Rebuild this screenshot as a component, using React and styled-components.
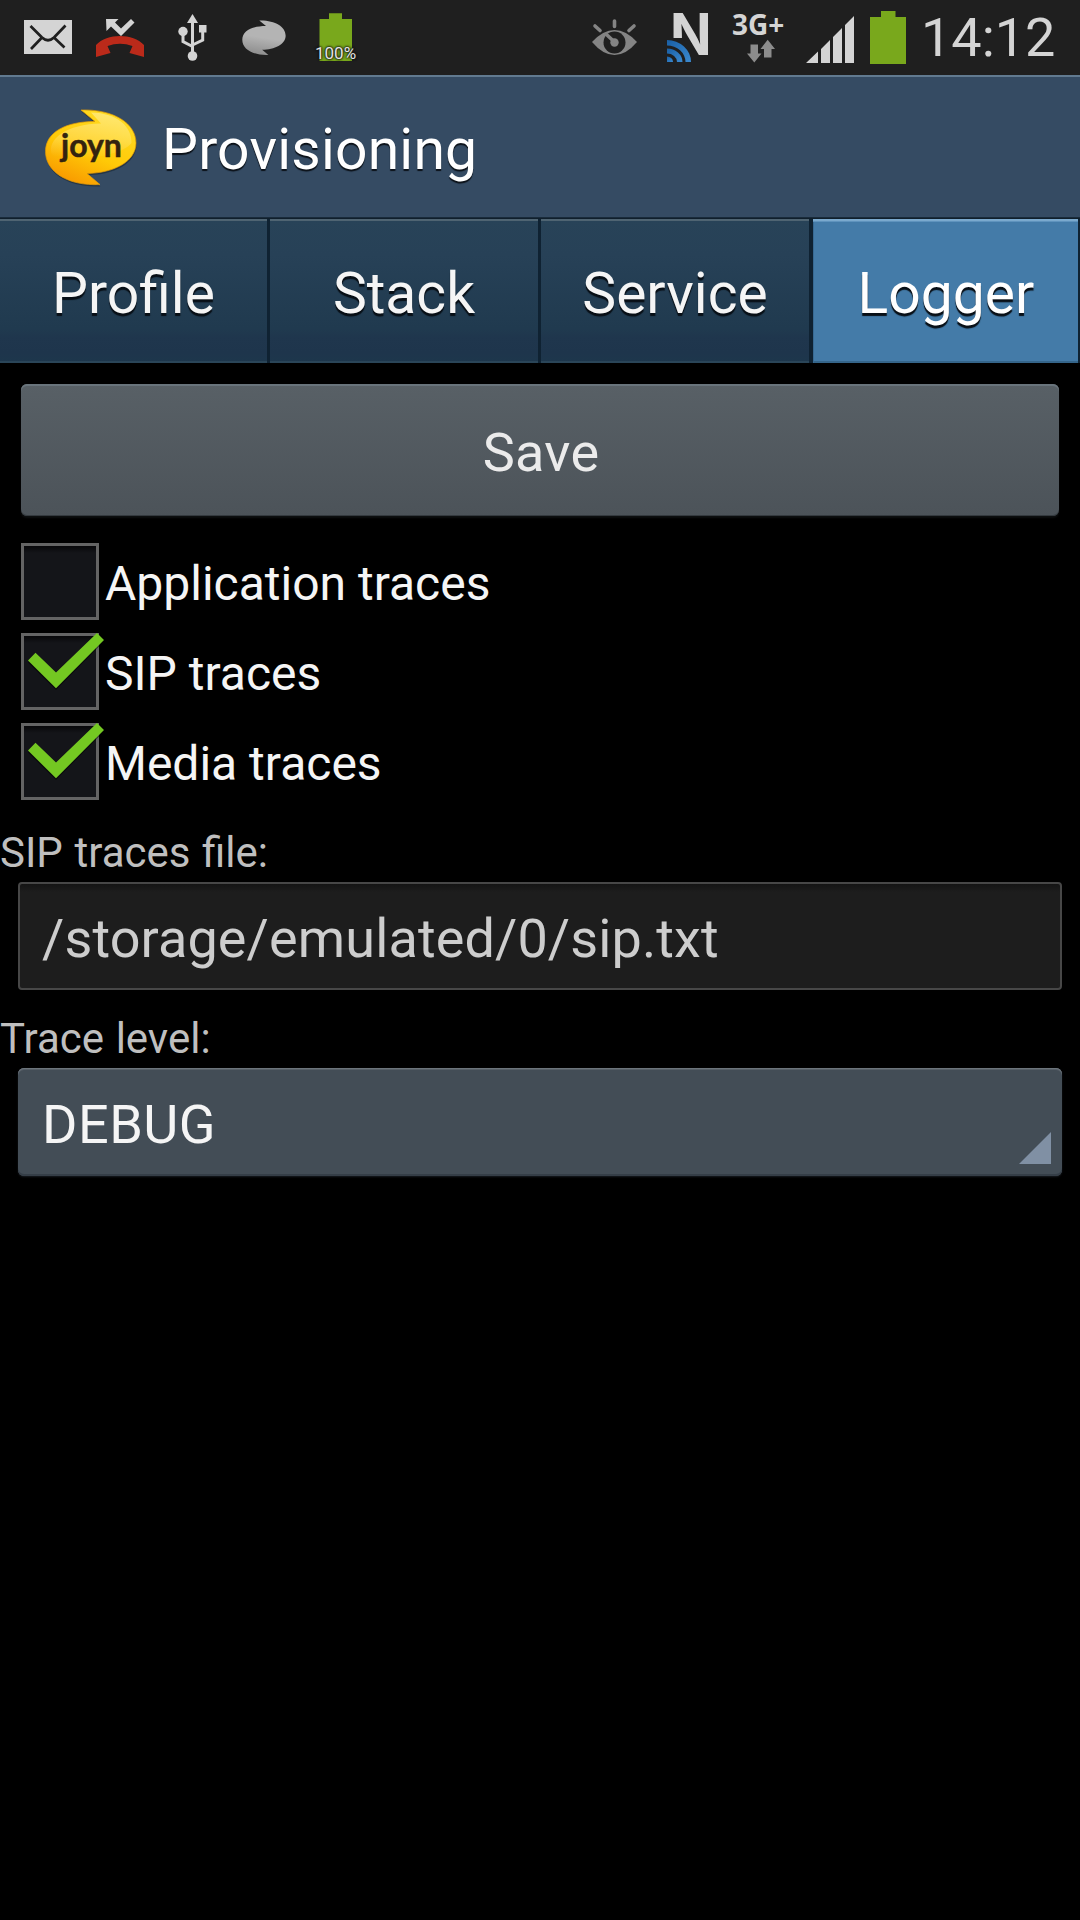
import React, { useState } from "react";
import styled, { createGlobalStyle } from "styled-components";

const GlobalStyle = createGlobalStyle`
  * { box-sizing: border-box; }
  body { margin: 0; background: #000; }
  button, input { font: inherit; color: inherit; border: 0; margin: 0; outline: 0; }
`;

const Screen = styled.div`
  width: 1080px;
  height: 1920px;
  overflow: hidden;
  display: flex;
  flex-direction: column;
  background: #000;
  color: #f5f5f5;
  font-family: Roboto, "Noto Sans", sans-serif;
  font-size: 54px;
`;

/* Status bar */
const StatusBar = styled.div`
  height: 75px;
  flex: none;
  display: flex;
  justify-content: space-between;
  padding: 0 24px;
  background: #1f1f1f;
`;

const StatusGroup = styled.div`
  display: flex;
  gap: ${(p) => p.$gap}px;
`;

const Glyph = styled.svg`
  display: block;
  height: 75px;
  width: ${(p) => p.$w}px;
  flex: none;
  overflow: visible;
`;

const NotificationBattery = styled.div`
  position: relative;
`;

const BatteryPercent = styled.span`
  position: absolute;
  left: 3px;
  top: 42px;
  font-size: 17px;
  line-height: 22px;
  color: #e4e4e4;
  text-shadow: 0 0 2px #111, 0 0 2px #111, 0 0 3px #111;
`;

const Network = styled.div`
  width: 56px;
  margin-left: 5px;
  padding-top: 10px;
  font-family: "Open Sans", sans-serif;
  font-weight: 700;
  font-size: 28px;
  line-height: 28px;
  color: #d4d4d4;
`;

const NetworkArrows = styled.svg`
  display: block;
  width: 28px;
  height: 24px;
  margin: 1px 0 0 15px;
`;

const Clock = styled.time`
  width: 135px;
  line-height: 75px;
  font-size: 54px;
  color: #d4d4d4;
`;

/* Title bar */
const TitleBar = styled.header`
  height: 144px;
  flex: none;
  display: flex;
  align-items: center;
  padding-left: 42px;
  background: #354b63;
  box-shadow: inset 0 2px #617a90, inset 0 -1px #101f2c, inset 0 -2px #192b3b;
`;

const Logo = styled.svg`
  width: 98px;
  height: 84px;
  margin-top: 2px;
  flex: none;
`;

const Title = styled.h1`
  margin: 0 0 0 22px;
  padding-top: 5px;
  font-weight: 400;
  font-size: 57px;
  line-height: 66px;
  letter-spacing: 0.2px;
  color: #fff;
  text-shadow: 0 2px 1px #0b1118;
`;

/* Tabs */
const Tabs = styled.nav`
  height: 144px;
  flex: none;
  display: grid;
  grid-template-columns: 267px 268px 268px 265px;
  gap: 3px;
  padding-right: 1px;
  background: #0f2232;
`;

const Tab = styled.button`
  padding: 5px 0 0;
  font-size: 57px;
  text-align: center;
  color: ${(p) => (p.$active ? "#fff" : "#f5f5f5")};
  text-shadow: 0 3px 1px #080f16;
  background: ${(p) =>
    p.$active
      ? "#447ba8"
      : "linear-gradient(#284358 0%, #274157 25%, #203a4f 76%, #1f364d 82%, #1e354c 93%, #1d374c 100%)"};
  box-shadow: ${(p) =>
    p.$active
      ? "inset 0 2px #7ba9cd, inset 0 3px #5f93bd, inset 1px 0 #386a93, inset 0 -2px #35658a"
      : "inset 0 2px #4f6472, inset 0 -2px #2a4558"};

  &:last-child {
    margin-left: 1px;
    margin-right: -1px;
    padding-left: 1px;
  }
`;

/* Form */
const SaveButton = styled.button`
  height: 132px;
  flex: none;
  margin: 21px 21px 0;
  padding: 5px 0 0 2px;
  border-radius: 6px;
  text-align: center;
  font-size: 54px;
  letter-spacing: 0.3px;
  color: #ebebeb;
  background: linear-gradient(#586066, #4c5359);
  box-shadow: inset 0 2px #69747c, inset 0 -1px #343a3f, 0 2px 2px #0d0f10;
`;

const CheckList = styled.div`
  display: flex;
  flex-direction: column;
  gap: 13px;
  margin: 27px 0 0 21px;
`;

const CheckRow = styled.div`
  display: flex;
  height: 77px;
  cursor: pointer;
`;

const CheckBox = styled.div`
  width: 78px;
  height: 77px;
  flex: none;
  border: 3px solid #646464;
  background: linear-gradient(#070709, #141519 7px);
`;

const CheckMark = styled.svg`
  display: block;
  width: 80px;
  height: 62px;
  margin: -3px 0 0 -3px;
  overflow: visible;
`;

const CheckLabel = styled.span`
  margin-left: 6px;
  padding-top: 2px;
  font-size: 48px;
  line-height: 77px;
`;

const FieldLabel = styled.div`
  height: ${(p) => p.$h}px;
  margin-top: ${(p) => p.$top}px;
  font-size: 42px;
  line-height: ${(p) => p.$h}px;
  word-spacing: 1.2px;
  color: #bfbfbf;
`;

const FileInput = styled.input`
  height: 108px;
  width: 1044px;
  margin-left: 18px;
  padding: 5px 22px 0;
  border: 2px solid #474747;
  border-radius: 4px;
  font-size: 54px;
  letter-spacing: 0.12px;
  color: #cdcdcd;
  background: linear-gradient(#141414, #1d1d1d 8px);
`;

const LevelSelect = styled.button`
  height: 108px;
  width: 1044px;
  margin-left: 18px;
  padding: 4px 11px 0 24px;
  display: flex;
  justify-content: space-between;
  align-items: center;
  border-radius: 6px;
  font-size: 54px;
  letter-spacing: 0.5px;
  background: #434d56;
  box-shadow: inset 0 1px #6d757c, inset 0 2px #565f67, inset 0 -2px #353e47, 0 1px 2px #171b20;
`;

const Corner = styled.svg`
  width: 32px;
  height: 32px;
  align-self: flex-end;
  margin-bottom: 12px;
`;

const BUBBLE =
  "M81 110C113 109 136 123 136 143C136 162 113 173 87 173.5L100 184.6C68 186 45.500 172 45.500 151.500C45.500 132 66 121.500 95 121.500Z";

const INITIAL_TRACES = [
  { name: "Application traces", on: false },
  { name: "SIP traces", on: true },
  { name: "Media traces", on: true },
];

function Notifications() {
  return (
    <StatusGroup $gap={24}>
      <Glyph $w={48} viewBox="24 0 48 75">
        <path d="M24 20h48v34H24z" fill="#d4d4d4" />
        <path d="M30.500 26L42 37.500Q48 43 54 37.500L65.500 25.500M41.500 38L31 49M54.500 38L64.500 47.500" fill="none" stroke="#1f1f1f" strokeWidth="2.700" />
      </Glyph>
      <Glyph $w={48} viewBox="96 0 48 75">
        <path d="M106 19H118.500L115 22.500L121 28.500L131 19L134.500 22.500L121 36L111 26.500L106.500 31Z" fill="#d4d4d4" />
        <path d="M96 45C107 33 133 33 144 45V57L129.500 53L132.500 46Q120 41.500 107.500 46L110.500 53L96 57Z" fill="#bb2a1a" />
      </Glyph>
      <Glyph $w={48} viewBox="168 0 48 75">
        <g fill="#d4d4d4">
          <path d="M192.500 14L198 23H187Z" />
          <circle cx="183" cy="31.500" r="4.700" />
          <path d="M199 25h7.500v7.500H199z" />
          <circle cx="192.500" cy="56" r="4.800" />
        </g>
        <path d="M192.500 22V56M183 32V41.500L192.500 46.500M202.700 31V40L192.500 45" fill="none" stroke="#d4d4d4" strokeWidth="3" />
      </Glyph>
      <Glyph $w={48} viewBox="240 0 48 75">
        <defs>
          <linearGradient id="greyBubble" x1="0.600" y1="0" x2="0.400" y2="1">
            <stop offset="0" stopColor="#b4b4b4" />
            <stop offset="0.500" stopColor="#b4b4b4" />
            <stop offset="1" stopColor="#8d8d8d" />
          </linearGradient>
        </defs>
        <path
          transform="translate(220.500 -30) scale(.479 .460)"
          d={BUBBLE}
          fill="url(#greyBubble)"
        />
      </Glyph>
      <NotificationBattery>
        <Glyph $w={48} viewBox="312 0 48 75">
          <path d="M319.500 19H329V13.300H342V19H352V61H319.500Z" fill="#79a81c" />
        </Glyph>
        <BatteryPercent>100%</BatteryPercent>
      </NotificationBattery>
    </StatusGroup>
  );
}

function SystemIcons() {
  return (
    <StatusGroup $gap={12}>
      <Glyph $w={54} viewBox="588 0 54 75">
        <path d="M592 42Q603 30 614.500 30T637 42Q626 55 614.500 55T592 42Z" fill="#848484" />
        <circle cx="614.500" cy="42.500" r="11" fill="#1f1f1f" />
        <circle cx="614.500" cy="42.500" r="4.200" fill="#848484" />
        <path d="M614.500 42L607 35M614.500 21V26.500M595 26L600 30.500M634 26L629 30.500" stroke="#848484" strokeWidth="3.600" strokeLinecap="round" />
      </Glyph>
      <Glyph $w={61} viewBox="654 0 61 75">
        <defs>
          <linearGradient id="wave" x1="0" y1="0" x2="1" y2="1">
            <stop offset="0" stopColor="#195fa5" />
            <stop offset="1" stopColor="#3b8ad0" />
          </linearGradient>
        </defs>
        <text
          transform="translate(670 55) scale(.95 1)"
          fontFamily="Inter, sans-serif"
          fontWeight="700"
          fontSize="57.500"
          fill="#d4d4d4"
        >
          N
        </text>
        <path d="M667 38H682.500L686 44V62H667Z" fill="#1f1f1f" />
        <g fill="url(#wave)">
          <path d="M667 40A24 22 0 0 1 691 62H685.500A18.500 16.500 0 0 0 667 45.500Z" />
          <path d="M667 48.500A15.500 13.500 0 0 1 682.500 62H677A10 8.500 0 0 0 667 53.500Z" />
          <path d="M667 56.500A6 5.500 0 0 1 673 62H667Z" />
        </g>
      </Glyph>
      <Network>
        3G+
        <NetworkArrows viewBox="747 39.500 28 24">
          <path d="M750.500 45H758V54H761.500L754.300 63L747 54H750.500ZM764 58V49.500H760.500L767.700 40.300L775 49.500H771.500V58Z" fill="#8c8c8c" />
        </NetworkArrows>
      </Network>
      <Glyph $w={57} viewBox="800 0 57 75">
        <path d="M806 63L818 51.500V63ZM821 63V49L830 40V63ZM833 63V37L842 28V63ZM845 63V25L854 16V63Z" fill="#d4d4d4" />
      </Glyph>
      <Glyph $w={40} viewBox="869 0 40 75">
        <path d="M870 17H881V11H895.500V17H906V64H870Z" fill="#79a81c" />
      </Glyph>
      <Clock>14:12</Clock>
    </StatusGroup>
  );
}

function JoynLogo() {
  return (
    <Logo viewBox="42 106 98 84">
      <defs>
        <linearGradient id="gold" x1="0.700" y1="0.100" x2="0.250" y2="0.950">
          <stop offset="0" stopColor="#ffd91f" />
          <stop offset="0.550" stopColor="#ffc907" />
          <stop offset="1" stopColor="#f99b00" />
        </linearGradient>
        <linearGradient id="gloss" x1="0.600" y1="0" x2="0.500" y2="1">
          <stop offset="0" stopColor="#fff" stopOpacity="0.350" />
          <stop offset="0.600" stopColor="#fff" stopOpacity="0.200" />
          <stop offset="1" stopColor="#fff" stopOpacity="0" />
        </linearGradient>
      </defs>
      <path d={BUBBLE} transform="translate(.5 1.800)" fill="#1c2c3c" opacity="0.700" />
      <path d={BUBBLE} fill="url(#gold)" stroke="#e39a05" strokeWidth="0.700" />
      <path
        d="M91 112.500C118 113 132 127 131.500 143C121 157 70 163 52 155C46 139 67 124 101 123.500Z"
        fill="url(#gloss)"
      />
      <text
        x="61"
        y="156.500"
        fontFamily="Lato, sans-serif"
        fontWeight="700"
        fontSize="32"
        fill="#33230f"
        stroke="#33230f"
        strokeWidth="0.500"
      >
        joyn
      </text>
    </Logo>
  );
}

export default function App() {
  const [tab, setTab] = useState("Logger");
  const [traces, setTraces] = useState(INITIAL_TRACES);
  const toggle = (name) =>
    setTraces((list) => list.map((t) => (t.name === name ? { ...t, on: !t.on } : t)));

  return (
    <Screen>
      <GlobalStyle />
      <StatusBar>
        <Notifications />
        <SystemIcons />
      </StatusBar>
      <TitleBar>
        <JoynLogo />
        <Title>Provisioning</Title>
      </TitleBar>
      <Tabs>
        {["Profile", "Stack", "Service", "Logger"].map((name) => (
          <Tab key={name} $active={name === tab} onClick={() => setTab(name)}>
            {name}
          </Tab>
        ))}
      </Tabs>
      <SaveButton>Save</SaveButton>
      <CheckList>
        {traces.map((t) => (
          <CheckRow key={t.name} onClick={() => toggle(t.name)}>
            <CheckBox>
              {t.on && (
                <CheckMark viewBox="21 633 80 62">
                  <path
                    d="M28 661L35.500 653L56 673L97 633L104 640L56 688.500Z"
                    transform="translate(0 1.500)"
                    fill="#000"
                    opacity="0.500"
                  />
                  <path d="M28 660.500L35.500 652.700L56 672.500L97 633L104 640L56 688.300Z" fill="#74c822" />
                </CheckMark>
              )}
            </CheckBox>
            <CheckLabel>{t.name}</CheckLabel>
          </CheckRow>
        ))}
      </CheckList>
      <FieldLabel $top={23} $h={59}>SIP traces file:</FieldLabel>
      <FileInput defaultValue="/storage/emulated/0/sip.txt" />
      <FieldLabel $top={19} $h={59}>Trace level:</FieldLabel>
      <LevelSelect>
        DEBUG
        <Corner viewBox="0 0 32 32">
          <path d="M32 0V32H0Z" fill="#8090a4" />
        </Corner>
      </LevelSelect>
    </Screen>
  );
}
